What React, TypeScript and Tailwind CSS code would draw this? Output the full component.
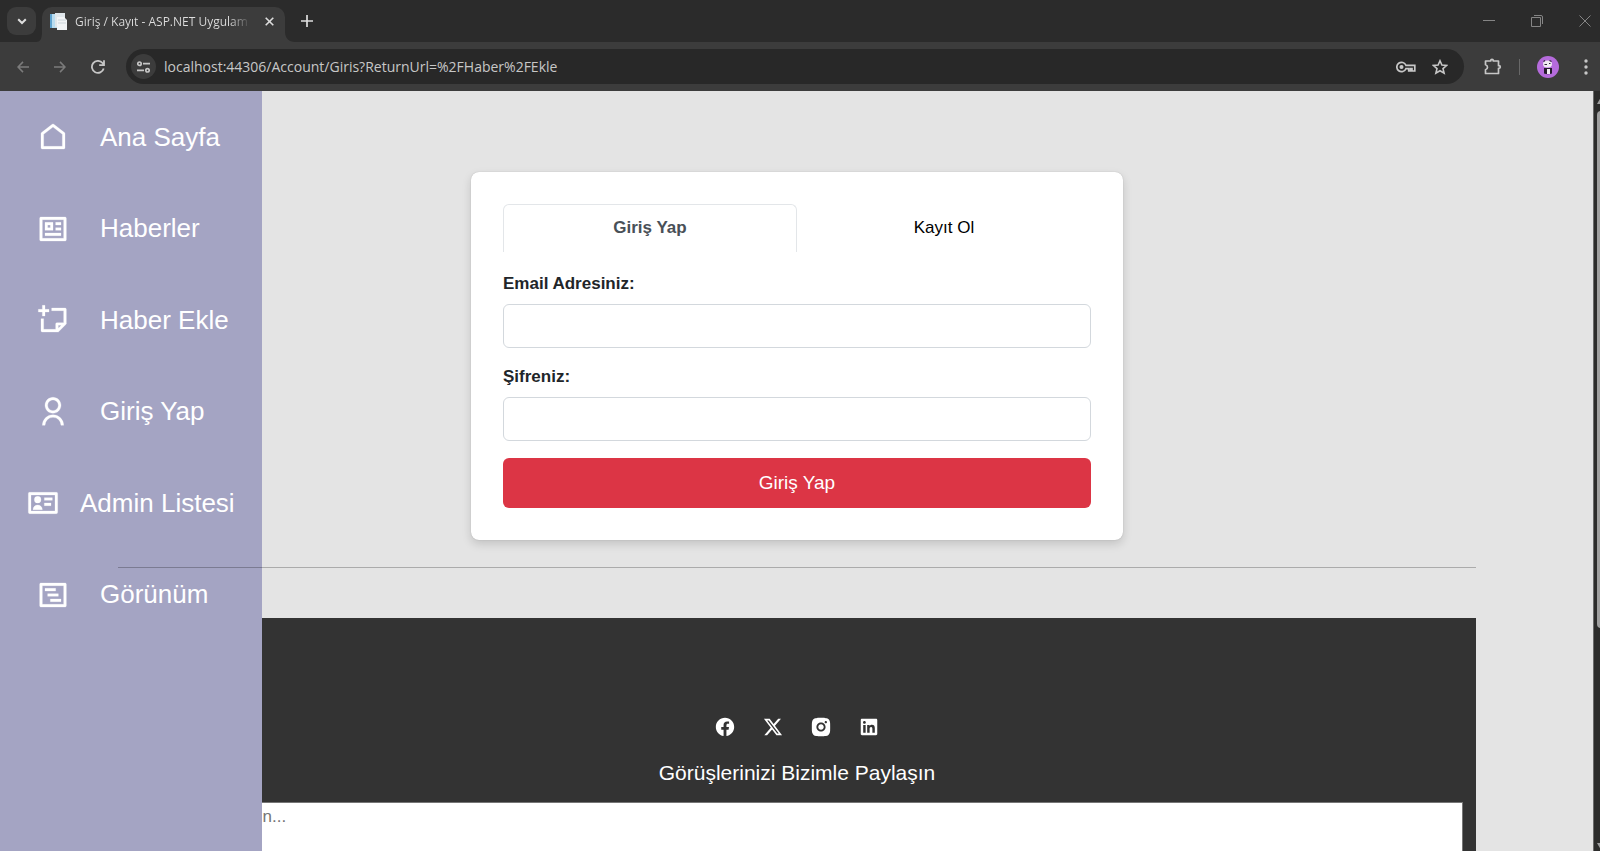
import React from 'react';
import { RiFacebookCircleFill, RiTwitterXFill, RiInstagramFill, RiLinkedinBoxFill } from 'react-icons/ri';

type MenuItem = {
  label: string;
  path: string;
  wide?: boolean;
};

const menuItems: MenuItem[] = [
  {
    label: 'Ana Sayfa',
    path: 'M21 20a1 1 0 0 1-1 1H4a1 1 0 0 1-1-1V9.49a1 1 0 0 1 .386-.79l8-6.222a1 1 0 0 1 1.228 0l8 6.222a1 1 0 0 1 .386.79V20zm-2-1V9.978l-7-5.444-7 5.444V19h14z',
  },
  {
    label: 'Haberler',
    path: 'M2 3.993A1 1 0 0 1 2.992 3h18.016c.548 0 .992.445.992.993v16.014a1 1 0 0 1-.992.993H2.992A.993.993 0 0 1 2 20.007V3.993zM4 5v14h16V5H4zm2 2h6v6H6V7zm2 2v2h2V9H8zm-2 6h12v2H6v-2zm8-8h4v2h-4V7zm0 4h4v2h-4v-2z',
  },
  {
    label: 'Haber Ekle',
    path: 'M4 1v3H1v2h3v3h2V6h3V4H6V1H4zM3 20.007V11h2v8h9v-4l.007-.117a1 1 0 0 1 .876-.876L15 14h5V5h-9V3h10.007c.548 0 .993.456.993 1.002V15l-6 5.996L4.002 21A.995.995 0 0 1 3 20.007zM18.171 16H16v2.169L18.171 16z',
  },
  {
    label: 'Giriş Yap',
    path: 'M4 22a8 8 0 1 1 16 0h-2a6 6 0 1 0-12 0H4zm8-9c-3.315 0-6-2.685-6-6s2.685-6 6-6 6 2.685 6 6-2.685 6-6 6zm0-2c2.21 0 4-1.79 4-4s-1.79-4-4-4-4 1.79-4 4 1.79 4 4 4z',
  },
  {
    label: 'Admin Listesi',
    path: 'M2 4h20a1 1 0 0 1 1 1v14a1 1 0 0 1-1 1H2a1 1 0 0 1-1-1V5a1 1 0 0 1 1-1zm1 2v12h18V6H3zm5 1a2.500 2.500 0 1 1 0 5 2.500 2.500 0 0 1 0-5zm-3.500 10a3.500 3.500 0 0 1 7 0h-7zM13 8h6v2h-6V8zm0 4h5v2h-5v-2z',
    wide: true,
  },
  {
    label: 'Görünüm',
    path: 'M3 3h18a1 1 0 0 1 1 1v16a1 1 0 0 1-1 1H3a1 1 0 0 1-1-1V4a1 1 0 0 1 1-1zm1 2v14h16V5H4zm2 2h8v2H6V7zm2 4h8v2H8v-2zm2 4h8v2h-8v-2z',
  },
];

const socials = [
  { name: 'Facebook', Icon: RiFacebookCircleFill },
  { name: 'X', Icon: RiTwitterXFill },
  { name: 'Instagram', Icon: RiInstagramFill },
  { name: 'LinkedIn', Icon: RiLinkedinBoxFill },
];

const TabStrip = () => (
  <div className="flex h-[42px] items-end justify-between bg-[#2b2b2b] text-[#dedede]">
    <div className="flex items-end">
      <button aria-label="Sekme ara" className="mb-[7px] ml-[7px] flex h-7 w-[29px] items-center justify-center rounded-[9px] bg-[#3c3c3c]">
        <svg width="10" height="7" viewBox="0 0 10 7" fill="none" stroke="currentColor" strokeWidth="2">
          <path d="M1.2 1.2 5 5l3.8-3.8" />
        </svg>
      </button>
      <svg width="6" height="10" viewBox="0 0 6 10" className="text-[#3c3c3c]">
        <path d="M6 0v10H0c4 0 6-3 6-10z" fill="currentColor" />
      </svg>
      <div className="flex h-[35px] w-[243px] items-center rounded-t-[10px] bg-[#3c3c3c] px-2 pb-[6px]">
        <svg width="17" height="17" viewBox="0 0 17 17">
          <path d="M0 1h5v14H0z" fill="#5fa3cf" />
          <path d="M2 1h5v14H2z" fill="#b9dcef" />
          <path d="M5 0h10v14H5z" fill="#dfe6ea" />
          <path d="M7 4h7l3 3v10H7z" fill="#f1f4f6" />
          <path d="M8 7h8M8 10h8" stroke="#ccd5da" />
        </svg>
        <span className="ml-2 w-[176px] overflow-hidden bg-linear-to-r from-[#dedede] from-88% to-[#3c3c3c] bg-clip-text text-xs leading-5 whitespace-nowrap text-transparent">
          Giriş / Kayıt - ASP.NET Uygulam
        </span>
        <button aria-label="Sekmeyi kapat" className="ml-auto flex h-4 w-4 items-center justify-center">
          <svg width="9" height="9" viewBox="0 0 9 9" stroke="currentColor" strokeWidth="1.6">
            <path d="m.7.7 7.6 7.6M8.3.7.7 8.3" />
          </svg>
        </button>
      </div>
      <svg width="10" height="10" viewBox="0 0 10 10" className="text-[#3c3c3c]">
        <path d="M0 0v10h10C4 10 0 6 0 0z" fill="currentColor" />
      </svg>
      <button aria-label="Yeni sekme" className="mb-[15px] ml-0.5 flex h-3 w-5 items-center justify-center">
        <svg width="12" height="12" viewBox="0 0 12 12" stroke="currentColor" strokeWidth="1.7">
          <path d="M6 0v12M0 6h12" />
        </svg>
      </button>
    </div>
    <div className="mb-[15px] flex items-center gap-9 pr-[9px] text-[#858585]">
      <button aria-label="Simge durumuna küçült">
        <svg width="12" height="12" viewBox="0 0 12 12" stroke="currentColor">
          <path d="M0 5.5h12" />
        </svg>
      </button>
      <button aria-label="Aşağı geri getir">
        <svg width="12" height="12" viewBox="0 0 12 12" fill="none" stroke="currentColor">
          <path d="M.5 2.500h9v9h-9zM3 .5h7q1.500 0 1.500 1.500v7" />
        </svg>
      </button>
      <button aria-label="Kapat">
        <svg width="12" height="12" viewBox="0 0 12 12" stroke="currentColor">
          <path d="m.5.5 11 11M11.5.5l-11 11" />
        </svg>
      </button>
    </div>
  </div>
);

const Toolbar = () => (
  <div className="flex h-[49px] items-center bg-[#3c3c3c] pr-3 pl-[17px] text-[#c7c7c7]">
    <div className="flex items-center gap-[25px]">
      <button aria-label="Geri" className="text-[#7b7b7b]">
        <svg width="12" height="12" viewBox="0 0 14 14" fill="none" stroke="currentColor" strokeWidth="1.8">
          <path d="M14 7H1.5M7 1 1.2 7 7 13" />
        </svg>
      </button>
      <button aria-label="İleri" className="text-[#7b7b7b]">
        <svg width="12" height="12" viewBox="0 0 14 14" fill="none" stroke="currentColor" strokeWidth="1.8">
          <path d="M0 7h12.5M7 1l5.800 6L7 13" />
        </svg>
      </button>
      <button aria-label="Yenile">
        <svg width="14" height="14" viewBox="0 0 14 14" fill="none" stroke="currentColor" strokeWidth="1.8">
          <path d="M12.7 8.500A6 6 0 1 1 11.5 3l1.200 1.500M13 .3v4.900H8.200" />
        </svg>
      </button>
    </div>
    <div className="ml-[21px] flex h-[35px] flex-1 items-center rounded-full bg-[#282828] pr-4 pl-[5px]">
      <button aria-label="Site bilgileri" className="flex h-[25px] w-[25px] items-center justify-center rounded-full bg-[#3c3c3c]">
        <svg width="13" height="12" viewBox="0 0 13 12" fill="none" stroke="currentColor" strokeWidth="1.7">
          <circle cx="2.5" cy="2.7" r="1.7" />
          <path d="M6 2.700h7M0 9.300h7" />
          <circle cx="10.5" cy="9.3" r="1.7" />
        </svg>
      </button>
      <input
        aria-label="Adres çubuğu"
        defaultValue="localhost:44306/Account/Giris?ReturnUrl=%2FHaber%2FEkle"
        className="ml-2 min-w-0 flex-1 bg-transparent text-sm leading-5 outline-none"
      />
      <div className="flex items-center gap-4">
        <button aria-label="Şifreler">
          <svg width="20" height="14" viewBox="0 0 20 14" fill="none" stroke="currentColor" strokeWidth="1.7">
            <path d="M9.900 5.300a4.700 4.700 0 1 0 0 3.400H12.700V11h1.800V8.700h1.500V11h2.800V5.300z" />
            <circle cx="5.5" cy="7" r="1.2" fill="currentColor" />
          </svg>
        </button>
        <button aria-label="Yer işareti">
          <svg width="16" height="16" viewBox="0 0 16 16" fill="none" stroke="currentColor" strokeWidth="1.6">
            <path d="m8 1.800 1.900 4.300 4.700.4-3.600 3.100 1.100 4.600L8 11.800l-4.100 2.400L5 9.600 1.400 6.500l4.700-.4z" />
          </svg>
        </button>
      </div>
    </div>
    <div className="ml-5 flex items-center">
      <button aria-label="Uzantılar">
        <svg width="18" height="18" viewBox="0 0 18 18" fill="none" stroke="currentColor" strokeWidth="1.700" strokeLinejoin="round">
          <path d="M1.500 3h5.200v-.3a1.300 1.300 0 0 1 2.600 0V3h5.200v4.700h.5a1.300 1.300 0 0 1 0 2.600h-.5V15.500h-13v-3.700q2-.5 2-2.500t-2-2.500z" />
        </svg>
      </button>
      <span className="mx-[17px] h-4 w-px bg-[#686868]" />
      <button aria-label="Profil">
        <svg width="22" height="22" viewBox="0 0 22 22">
          <circle cx="11" cy="11" r="11" fill="#b56bdc" />
          <path d="M7 12h8v5.500q-4 1.500-8 0z" fill="#241b2b" />
          <path d="M10 13h3v5h-3z" fill="#f3eef5" />
          <ellipse cx="10.5" cy="8" rx="4.500" ry="3.500" fill="#efeaf2" />
          <path d="M6.500 5.500 8 4.500M12.500 4.500l2 1M7.500 8.500h2.500M12 7.500h1.500" stroke="#33263b" strokeWidth="1.200" />
        </svg>
      </button>
      <button aria-label="Diğer" className="ml-[25px]">
        <svg width="4" height="16" viewBox="0 0 4 16" fill="currentColor">
          <circle cx="2" cy="2" r="1.7" />
          <circle cx="2" cy="8" r="1.7" />
          <circle cx="2" cy="14" r="1.7" />
        </svg>
      </button>
    </div>
  </div>
);

const Sidebar = () => (
  <aside className="absolute inset-y-0 left-0 w-[262px] bg-[#a4a4c3] text-white">
    <nav className="grid h-[549px] grid-rows-6">
      {menuItems.map((item) => (
        <a
          key={item.label}
          href="#"
          className={`flex items-center text-[26px] leading-8 ${item.wide ? 'gap-[21px] pl-[27px]' : 'gap-[31px] pl-[37px]'}`}
        >
          <svg width="32" height="32" viewBox="0 0 24 24" fill="currentColor" fillRule="evenodd" stroke="currentColor" strokeWidth="0.2" className="mt-px">
            <path d={item.path} />
          </svg>
          {item.label}
        </a>
      ))}
    </nav>
  </aside>
);

const LoginCard = () => (
  <div className="mx-auto w-[652px] rounded-lg bg-white p-8 text-[17px] leading-6 shadow-[0_4px_10px_rgba(0,0,0,0.15),0_0_1px_rgba(0,0,0,0.25)]">
    <div role="tablist" className="grid grid-cols-2">
      <button role="tab" aria-selected="true" className="h-12 rounded-t-md border border-b-0 border-[#e3e6e9] pb-[2px] font-bold text-[#495057]">
        Giriş Yap
      </button>
      <button role="tab" aria-selected="false" className="h-12 border border-b-0 border-transparent pb-[2px] text-black">
        Kayıt Ol
      </button>
    </div>
    <form className="mt-5 flex flex-col gap-[17px]">
      <div className="flex flex-col gap-2">
        <label htmlFor="email" className="font-bold text-[#212529]">Email Adresiniz:</label>
        <input id="email" type="email" className="h-11 rounded-md border border-[#d3d8dd] px-3 outline-none" />
      </div>
      <div className="flex flex-col gap-2">
        <label htmlFor="password" className="font-bold text-[#212529]">Şifreniz:</label>
        <input id="password" type="password" className="h-11 rounded-md border border-[#d3d8dd] px-3 outline-none" />
      </div>
      <button type="button" className="h-[50px] rounded-md bg-[#dc3545] text-[19px] text-white">
        Giriş Yap
      </button>
    </form>
  </div>
);

const Footer = () => (
  <footer className="flex-1 bg-[#333] px-[13px] pt-[98px] text-white">
    <div className="flex justify-center gap-[26px]">
      {socials.map(({ name, Icon }) => (
        <a key={name} href="#" aria-label={name}>
          <Icon size={22} />
        </a>
      ))}
    </div>
    <label htmlFor="feedback" className="mt-[21px] block text-center text-[21px] leading-7">
      Görüşlerinizi Bizimle Paylaşın
    </label>
    <textarea
      id="feedback"
      rows={4}
      placeholder="Görüşünüzü yazın..."
      className="mt-[15px] block w-full resize-none border border-[#767676] bg-white px-0.5 py-0.5 text-[17px] leading-6 text-black placeholder:text-[#757575]"
    />
  </footer>
);

const Scrollbar = () => (
  <div className="flex w-[7px] shrink-0 flex-col overflow-hidden border-l border-[#6b6b6b] bg-[#2c2c2b] pl-[3px] text-[#9f9f9f]">
    <svg width="8" height="8" viewBox="0 0 8 8" className="mt-1.5 shrink-0">
      <path d="M4 0 8 7H0z" fill="currentColor" />
    </svg>
    <div className="mt-[6px] h-[68%] w-2 shrink-0 rounded-full bg-[#9f9f9f]" />
    <svg width="8" height="8" viewBox="0 0 8 8" className="mt-auto shrink-0">
      <path d="M0 0h8L4 7z" fill="currentColor" />
    </svg>
  </div>
);

const App = () => {
  return (
    <div className="flex h-screen flex-col overflow-hidden">
      <header className="shrink-0 font-['Open_Sans','Noto_Sans',sans-serif]">
        <TabStrip />
        <Toolbar />
      </header>
      <div className="flex min-h-0 flex-1 bg-[#e4e4e4] font-['Liberation_Sans',Arial,sans-serif]">
        <div className="relative min-w-0 flex-1 overflow-hidden">
          <Sidebar />
          <main className="flex h-full flex-col pt-[81px] pr-[117px] pl-[118px]">
            <LoginCard />
            {/* the translucent rule paints above the sidebar */}
            <hr className="mt-[27px] mb-[50px] border-t border-black opacity-25" />
            <Footer />
          </main>
        </div>
        <Scrollbar />
      </div>
    </div>
  );
};

export default App;
